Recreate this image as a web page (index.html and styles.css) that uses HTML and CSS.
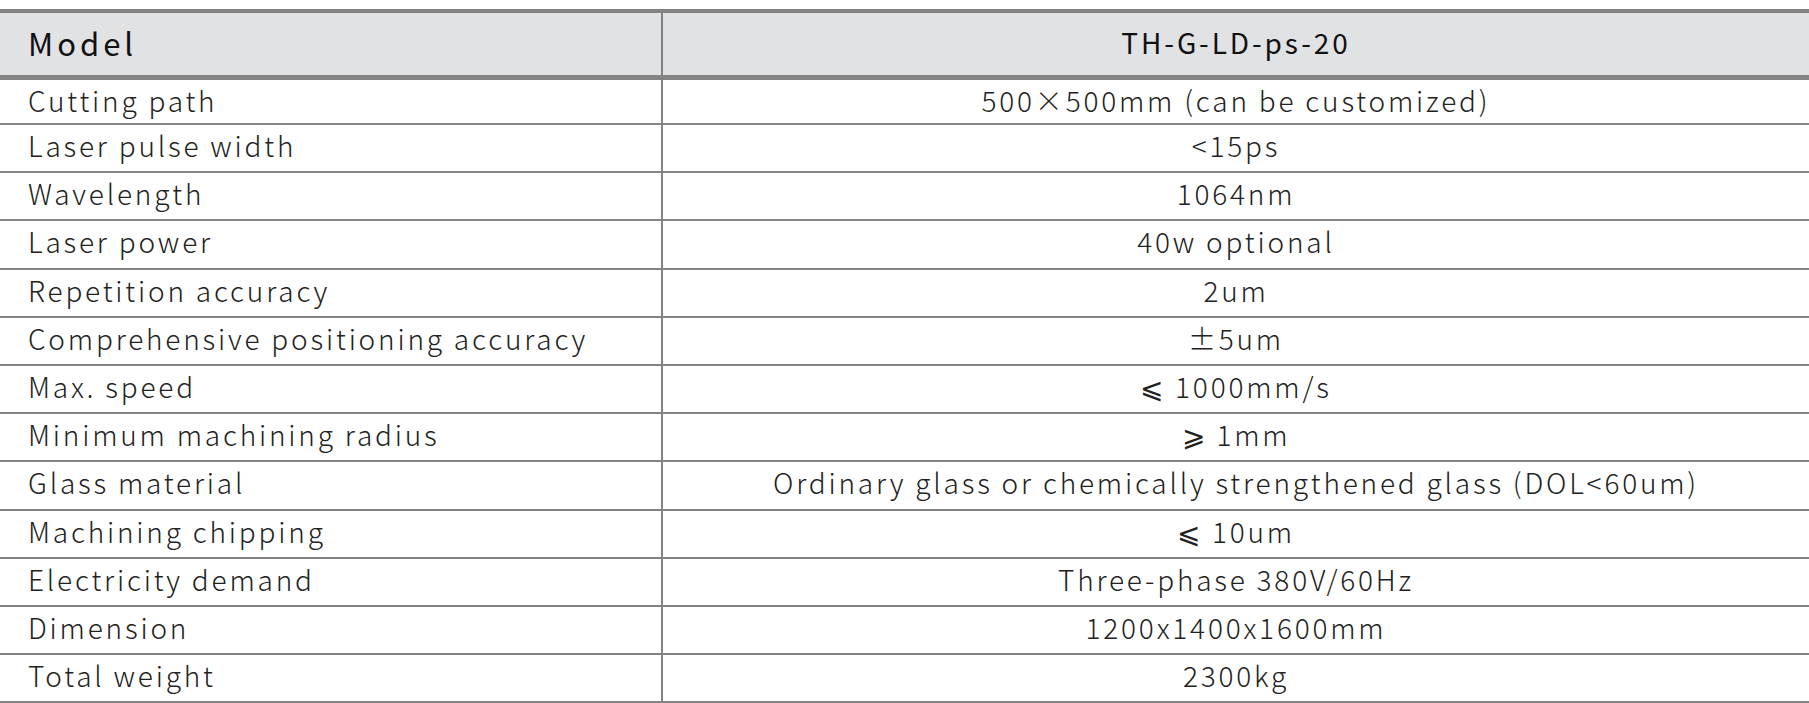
FILE: index.html
```html
<!DOCTYPE html>
<html lang="en">
<head>
<meta charset="utf-8">
<title>Specifications</title>
<link rel="stylesheet" href="styles.css">
</head>
<body>
<div class="spec">
  <div class="row head">
    <div class="cell key"><span class="model">Model</span></div>
    <div class="cell val">TH-G-LD-ps-20</div>
  </div>
  <div class="row first">
    <div class="cell key">Cutting path</div>
    <div class="cell val">500×500mm (can be customized)</div>
  </div>
  <div class="row">
    <div class="cell key">Laser pulse width</div>
    <div class="cell val">&lt;15ps</div>
  </div>
  <div class="row">
    <div class="cell key">Wavelength</div>
    <div class="cell val">1064nm</div>
  </div>
  <div class="row">
    <div class="cell key">Laser power</div>
    <div class="cell val">40w optional</div>
  </div>
  <div class="row">
    <div class="cell key">Repetition accuracy</div>
    <div class="cell val">2um</div>
  </div>
  <div class="row">
    <div class="cell key">Comprehensive positioning accuracy</div>
    <div class="cell val">±5um</div>
  </div>
  <div class="row">
    <div class="cell key">Max. speed</div>
    <div class="cell val">⩽ 1000mm/s</div>
  </div>
  <div class="row">
    <div class="cell key">Minimum machining radius</div>
    <div class="cell val">⩾ 1mm</div>
  </div>
  <div class="row">
    <div class="cell key">Glass material</div>
    <div class="cell val">Ordinary glass or chemically strengthened glass (DOL&lt;60um)</div>
  </div>
  <div class="row">
    <div class="cell key">Machining chipping</div>
    <div class="cell val">⩽ 10um</div>
  </div>
  <div class="row">
    <div class="cell key">Electricity demand</div>
    <div class="cell val">Three-phase 380V/60Hz</div>
  </div>
  <div class="row">
    <div class="cell key">Dimension</div>
    <div class="cell val">1200x1400x1600mm</div>
  </div>
  <div class="row last">
    <div class="cell key">Total weight</div>
    <div class="cell val">2300kg</div>
  </div>
</div>
</body>
</html>
```
FILE: styles.css
```css
* { box-sizing: border-box; }
html, body { margin: 0; padding: 0; background: #ffffff; }
body {
  font-family: "Noto Sans CJK SC", "Noto Sans", sans-serif;
  color: #222222;
}
.spec {
  margin-top: 9px;
  border-top: 4px solid #838383;
}
.row {
  display: grid;
  grid-template-columns: 663px 1fr;
  height: 48.2px;
  border-bottom: 2px solid #838383;
}
.row.first { height: 45px; }
.row.last { height: 50.2px; border-bottom-width: 4px; }
.row.head {
  height: 67px;
  border-bottom-width: 5px;
  background: #e1e2e4;
}
.cell {
  display: flex;
  align-items: center;
  font-size: 28px;
  font-weight: 300;
  letter-spacing: 2.8px;
  white-space: nowrap;
  padding-bottom: 6px;
}
.key {
  padding-left: 28px;
  border-right: 2px solid #838383;
}
.val { justify-content: center; }
.head .cell {
  font-size: 28px;
  font-weight: 400;
  color: #111111;
  letter-spacing: 2.9px;
  padding-bottom: 4px;
}
.head .model {
  font-size: 31px;
  letter-spacing: 4px;
}
```
